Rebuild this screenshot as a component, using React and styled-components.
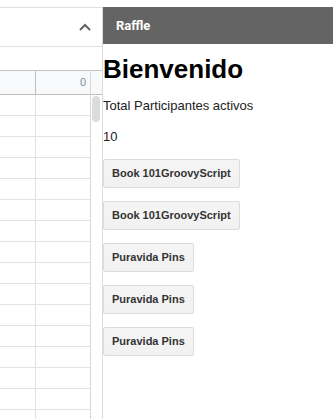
import React from "react";
import styled, { createGlobalStyle } from "styled-components";

const GlobalStyle = createGlobalStyle`
  html, body {
    margin: 0;
    padding: 0;
    background: #fff;
  }
  body {
    font-family: "Liberation Sans", Arial, sans-serif;
    font-size: 13px;
    color: #222;
  }
`;

const Screen = styled.div`
  width: 333px;
  height: 419px;
  padding-top: 7px;
  box-sizing: border-box;
  display: flex;
  overflow: hidden;
`;

const SheetPane = styled.div`
  width: 103px;
  flex-shrink: 0;
  border-right: 1px solid #dadce0;
  box-sizing: border-box;
  display: flex;
  flex-direction: column;
`;

const Toolbar = styled.div`
  height: 40px;
  box-sizing: border-box;
  border-top: 1px solid #e0e0e0;
  border-bottom: 1px solid #e0e0e0;
  display: flex;
  align-items: center;
  justify-content: flex-end;
  padding-right: 11px;
`;

const FormulaGap = styled.div`
  height: 23px;
`;

const GridArea = styled.div`
  flex: 1;
  display: flex;
  overflow: hidden;
`;

const Grid = styled.div`
  width: 91px;
  flex-shrink: 0;
  border-right: 1px solid #d6d6d6;
  box-sizing: border-box;
`;

const Row = styled.div`
  display: grid;
  grid-template-columns: 36px 1fr;
  height: ${(p) => (p.$head ? 25 : 21)}px;
  box-sizing: border-box;
  border-top: ${(p) => (p.$head ? "1px solid #c4c4c4" : "none")};
  border-bottom: 1px solid ${(p) => (p.$head ? "#c0c0c0" : "#e2e2e2")};
  background: ${(p) => (p.$head ? "#f8f9fa" : "#fff")};
`;

const Cell = styled.div`
  border-right: 1px solid ${(p) => (p.$head ? "#c0c0c0" : "#e2e2e2")};
`;

const HeadValue = styled.div`
  font-size: 11px;
  color: #7d8ea6;
  text-align: right;
  padding-right: 4px;
  line-height: 23px;
`;

const ScrollTrack = styled.div`
  flex: 1;
  display: flex;
  flex-direction: column;
`;

const TrackHead = styled.div`
  height: 25px;
  box-sizing: border-box;
  border-top: 1px solid #c4c4c4;
  border-bottom: 1px solid #c0c0c0;
  background: #f8f9fa;
`;

const Thumb = styled.div`
  width: 8px;
  height: 26px;
  margin: 1px 0 0 1px;
  border-radius: 4px;
  background: #dadce0;
`;

const Sidebar = styled.div`
  flex: 1;
  display: flex;
  flex-direction: column;
`;

const SidebarHeader = styled.div`
  height: 37px;
  background: #646464;
  color: #fff;
  display: flex;
  align-items: center;
  padding-left: 13px;
  font-family: Roboto, "Liberation Sans", sans-serif;
  font-weight: 700;
  font-size: 13px;
`;

const SidebarBody = styled.div`
  display: flex;
  flex-direction: column;
  align-items: flex-start;
  gap: 13px;
  padding-top: 10px;
`;

const Title = styled.h1`
  margin: 0;
  font-size: 26px;
  line-height: 30px;
  font-weight: bold;
  color: #000;
`;

const Text = styled.p`
  margin: 0;
  font-size: 13px;
  line-height: 18px;
  color: #222;
`;

const PrizeButton = styled.button`
  height: 29px;
  box-sizing: border-box;
  margin: 0;
  padding: 0 8px;
  border: 1px solid #dcdcdc;
  border-radius: 2px;
  background: linear-gradient(#f5f5f5, #f1f1f1);
  color: #333;
  font-family: "Liberation Sans", Arial, sans-serif;
  font-size: 11px;
  font-weight: bold;
  line-height: 27px;
`;

const prizes = [
  "Book 101GroovyScript",
  "Book 101GroovyScript",
  "Puravida Pins",
  "Puravida Pins",
  "Puravida Pins",
];

const App = () => {
  const rows = Array.from({ length: 16 });

  return (
    <>
      <GlobalStyle />
      <Screen>
        <SheetPane>
          <Toolbar>
            <svg width="12" height="8" viewBox="0 0 12 8">
              <path
                d="M1 7 L6 2 L11 7"
                fill="none"
                stroke="#5f6368"
                strokeWidth="2"
              />
            </svg>
          </Toolbar>
          <FormulaGap />
          <GridArea>
            <Grid>
              <Row $head>
                <Cell $head />
                <HeadValue>0</HeadValue>
              </Row>
              {rows.map((_, i) => (
                <Row key={i}>
                  <Cell />
                  <div />
                </Row>
              ))}
            </Grid>
            <ScrollTrack>
              <TrackHead />
              <Thumb />
            </ScrollTrack>
          </GridArea>
        </SheetPane>
        <Sidebar>
          <SidebarHeader>Raffle</SidebarHeader>
          <SidebarBody>
            <Title>Bienvenido</Title>
            <Text>Total Participantes activos</Text>
            <Text>10</Text>
            {prizes.map((p, i) => (
              <PrizeButton key={i}>{p}</PrizeButton>
            ))}
          </SidebarBody>
        </Sidebar>
      </Screen>
    </>
  );
};

export default App;
